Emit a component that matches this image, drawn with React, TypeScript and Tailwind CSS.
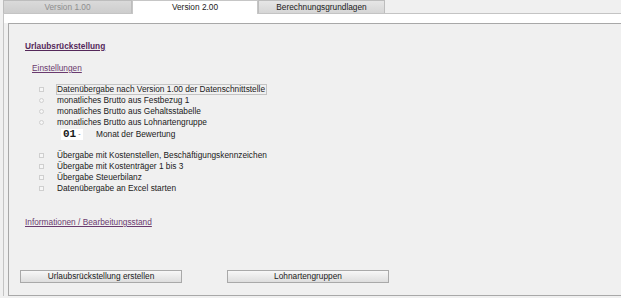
import React from "react";

type Row = { kind: "check" | "radio"; label: string; focused?: boolean };

const groupA: Row[] = [
  { kind: "check", label: "Datenübergabe nach Version 1.00 der Datenschnittstelle", focused: true },
  { kind: "radio", label: "monatliches Brutto aus Festbezug 1" },
  { kind: "radio", label: "monatliches Brutto aus Gehaltsstabelle" },
  { kind: "radio", label: "monatliches Brutto aus Lohnartengruppe" },
];

const groupB: Row[] = [
  { kind: "check", label: "Übergabe mit Kostenstellen, Beschäftigungskennzeichen" },
  { kind: "check", label: "Übergabe mit Kostenträger 1 bis 3" },
  { kind: "check", label: "Übergabe Steuerbilanz" },
  { kind: "check", label: "Datenübergabe an Excel starten" },
];

function OptionRow({ row }: { row: Row }) {
  return (
    <div className="flex h-[11px] items-center">
      <span className="flex w-[17px] justify-start">
        {row.kind === "check" ? (
          <span className="h-[5px] w-[5px] border border-[#cfcfcf] bg-[#f6f6f6]" />
        ) : (
          <span className="h-[5px] w-[5px] rounded-full border border-[#d0d0d0] bg-[#f6f6f6]" />
        )}
      </span>
      <span
        className={
          "whitespace-nowrap leading-[9px] " +
          (row.focused ? "border border-[#c4c4c4] pr-px" : "pl-px")
        }
      >
        {row.label}
      </span>
    </div>
  );
}

function Tab({ label, active, muted, width }: { label: string; active?: boolean; muted?: boolean; width: string }) {
  return (
    <div
      className={
        "flex items-center justify-center border border-b-0 " +
        width +
        (active
          ? " relative z-10 h-[14px] border-[#c6c6c6] bg-white text-[#1a1a1a]"
          : muted
          ? " h-[13px] border-[#bdbdbd] bg-gradient-to-b from-[#dadada] to-[#cdcdcd] text-[#8e8e8e]"
          : " h-[13px] border-[#bdbdbd] bg-gradient-to-b from-[#e6e6e6] to-[#d6d6d6] text-[#1a1a1a]")
      }
    >
      {label}
    </div>
  );
}

function Button({ label }: { label: string }) {
  return (
    <button
      type="button"
      className="flex h-[13px] w-[162px] items-center justify-center border border-[#a9a9a9] bg-gradient-to-b from-[#f7f7f7] to-[#dedede] text-[8.3px] text-[#1a1a1a]"
    >
      {label}
    </button>
  );
}

export default function App() {
  return (
    <div className="h-[298px] w-[621px] overflow-hidden bg-[#f0f0f0] font-['Liberation_Sans',Arial,sans-serif] text-[8.3px] text-[#1a1a1a]">
      <div className="flex pl-[3px]">
        <Tab label="Version 1.00" muted width="w-[129px]" />
        <Tab label="Version 2.00" active width="w-[126px]" />
        <Tab label="Berechnungsgrundlagen" width="w-[127px]" />
      </div>

      <div className="-mt-px ml-[3px] border-l border-t border-[#c4c4c4]">
        <div className="h-[9px] bg-white" />
        <div className="ml-[4px] flex h-[273px] w-[614px] flex-col border border-[#a8a8a8] bg-[#f0f0f0] pl-[11px]">
          <div className="pl-[5px]">
            <div className="mt-[17px] h-[11px] font-bold leading-[11px] text-[#54285a] underline">
              Urlaubsrückstellung
            </div>
            <div className="ml-[7px] mt-[11px] h-[11px] leading-[11px] text-[#6a3a6e] underline">
              Einstellungen
            </div>

            <div className="ml-[14px] mt-[10px] flex flex-col">
              {groupA.map((r) => (
                <OptionRow key={r.label} row={r} />
              ))}
              <div className="flex h-[12px] items-center pl-[22px]">
                <span className="flex h-[11px] w-[22px] items-center bg-white pl-[2px]">
                  <span className="font-['Liberation_Mono',monospace] text-[11px] font-bold leading-[11px]">01</span>
                  <span className="ml-[2px] text-[7px] text-[#777]">-</span>
                </span>
                <span className="ml-[13px]">Monat der Bewertung</span>
              </div>
            </div>

            <div className="ml-[14px] mt-[10px] flex flex-col">
              {groupB.map((r) => (
                <OptionRow key={r.label} row={r} />
              ))}
            </div>

            <div className="mt-[23px] h-[11px] leading-[11px] text-[#6a3a6e] underline">
              Informationen / Bearbeitungsstand
            </div>
          </div>

          <div className="mt-[42px] flex gap-[45px]">
            <Button label="Urlaubsrückstellung erstellen" />
            <Button label="Lohnartengruppen" />
          </div>
        </div>
      </div>
    </div>
  );
}
